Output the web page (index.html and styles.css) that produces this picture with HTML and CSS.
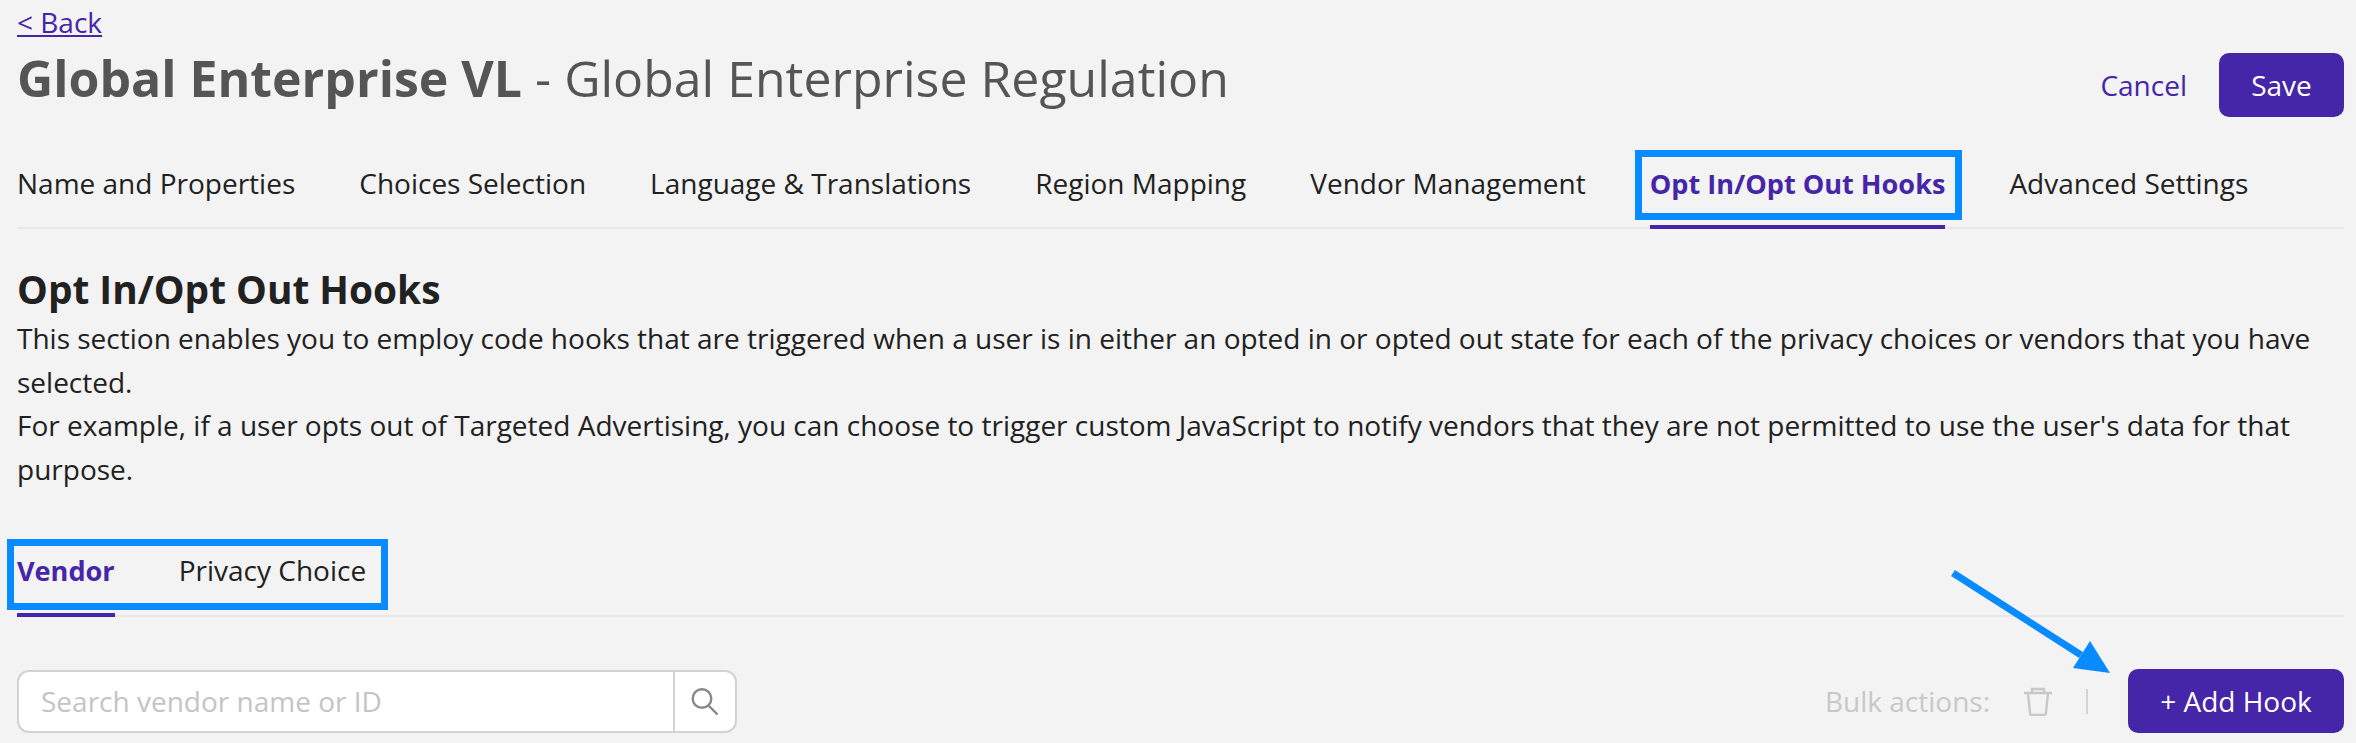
FILE: index.html
```html
<!DOCTYPE html>
<html lang="en">
<head>
<meta charset="utf-8">
<title>Opt In/Opt Out Hooks</title>
<link rel="stylesheet" href="styles.css">
</head>
<body>
<main class="page">
  <a class="back" href="#">&lt; Back</a>
  <header class="header">
    <h1 class="title"><strong>Global Enterprise VL</strong> - Global Enterprise Regulation</h1>
    <div class="header-actions">
      <a class="cancel" href="#">Cancel</a>
      <button class="btn btn-save">Save</button>
    </div>
  </header>
  <nav class="tabs main-tabs">
    <a class="tab" href="#">Name and Properties</a>
    <a class="tab" href="#">Choices Selection</a>
    <a class="tab" href="#">Language &amp; Translations</a>
    <a class="tab" href="#">Region Mapping</a>
    <a class="tab" href="#">Vendor Management</a>
    <a class="tab active marked" href="#">Opt In/Opt Out Hooks</a>
    <a class="tab" href="#">Advanced Settings</a>
  </nav>
  <section class="intro">
    <h2 class="section-title">Opt In/Opt Out Hooks</h2>
    <p class="section-text">This section enables you to employ code hooks that are triggered when a user is in either an opted in or opted out state for each of the privacy choices or vendors that you have selected.<br>For example, if a user opts out of Targeted Advertising, you can choose to trigger custom JavaScript to notify vendors that they are not permitted to use the user's data for that purpose.</p>
  </section>
  <nav class="tabs sub-tabs">
    <a class="tab active" href="#">Vendor</a>
    <a class="tab" href="#">Privacy Choice</a>
    <span class="sub-mark"></span>
  </nav>
  <div class="toolbar">
    <div class="search">
      <input class="search-input" type="text" placeholder="Search vendor name or ID">
      <span class="search-btn">
        <svg width="28" height="27" viewBox="0 0 28 27" fill="none" stroke="#888" stroke-width="2.4"><circle cx="11" cy="10.5" r="9.3"/><path d="M17.5 17.5l9 9"/></svg>
      </span>
    </div>
    <div class="bulk">
      <span class="bulk-label">Bulk actions:</span>
      <svg class="trash" width="28" height="29" viewBox="0 0 28 29" fill="none" stroke="#c8c8c8" stroke-width="2.4"><path d="M0 6h28M8 6V2h12v4M4 6l2 20q0 2 2 2h12q2 0 2-2l2-20"/></svg>
      <span class="bulk-sep"></span>
    </div>
    <button class="btn btn-add">+ Add Hook</button>
  </div>
  <svg class="arrow" width="170" height="110" viewBox="0 0 170 110"><path d="M3 3L131 85" stroke="#078bff" stroke-width="7" fill="none"/><path d="M160 103L123 98L140 71Z" fill="#078bff"/></svg>
</main>
</body>
</html>
```
FILE: styles.css
```css
*, *::before, *::after { box-sizing: border-box; }
html, body { margin: 0; height: 743px; overflow: hidden; }
body { background: #f3f3f3; font-family: "Open Sans", sans-serif; color: #212121; font-size: 28px; }
.page { position: relative; height: 743px; padding: 0 12px 0 17px; overflow: hidden; }
a { text-decoration: none; }
.back { display: block; width: max-content; height: 36px; margin-top: 4px; line-height: 36px; color: #4525a8; text-decoration: underline; }
.header { display: flex; justify-content: space-between; align-items: flex-start; height: 93px; }
.title { margin: 0; font-size: 50px; line-height: 76px; font-weight: 400; color: #555; }
.title strong { font-weight: 700; }
.header-actions { display: flex; align-items: center; gap: 32px; margin-top: 13px; }
.cancel { color: #4525a8; }
.btn { display: block; height: 64px; border: 0; border-radius: 10px; background: #4525a8; color: #fff; font: inherit; }
.btn-save { width: 125px; }
.btn-add { width: 216px; }
.tabs { display: flex; border-bottom: 2px solid #e8e8e8; }
.tab { position: relative; color: #212121; }
.tab.active { color: #4525a8; font-size: 27.1px; font-weight: 700; }
.tab.active::after { content: ""; position: absolute; left: 0; right: 0; bottom: -4px; height: 4px; background: #4525a8; }
.main-tabs { gap: 64px; height: 96px; padding-top: 32px; line-height: 37px; }
.main-tabs .tab { height: 60px; }
.marked::before { content: ""; position: absolute; left: -15px; right: -17px; top: -15px; height: 70px; border: 7px solid #078bff; }
.intro { margin-top: 33px; }
.section-title { margin: 0 0 1px; font-size: 38.8px; line-height: 54px; font-weight: 700; color: #212121; }
.section-text { margin: 0; line-height: 43.5px; color: #212121; }
.sub-tabs { position: relative; gap: 64px; height: 90px; margin-top: 36px; padding-top: 25px; line-height: 37px; }
.sub-tabs .tab { height: 61px; }
.sub-mark { position: absolute; left: -10px; top: 12px; width: 381px; height: 71px; border: 7px solid #078bff; }
.toolbar { display: flex; align-items: center; margin-top: 52px; height: 64px; }
.search { display: flex; width: 720px; height: 63px; background: #fff; border: 2px solid #cfd3d6; border-radius: 12px; overflow: hidden; }
.search-input { flex: 1; min-width: 0; border: 0; outline: 0; padding: 0 22px; background: transparent; font: inherit; color: #212121; }
.search-input::placeholder { color: #c4c4c4; opacity: 1; }
.search-btn { display: flex; align-items: center; justify-content: center; width: 62px; border-left: 2px solid #cfd3d6; }
.bulk { display: flex; align-items: center; margin-left: auto; margin-right: 40px; color: #c8c8c8; }
.trash { margin-left: 34px; }
.bulk-sep { width: 2px; height: 25px; margin-left: 34px; background: #d4d4d4; }
.arrow { position: absolute; left: 1950px; top: 570px; }
```
